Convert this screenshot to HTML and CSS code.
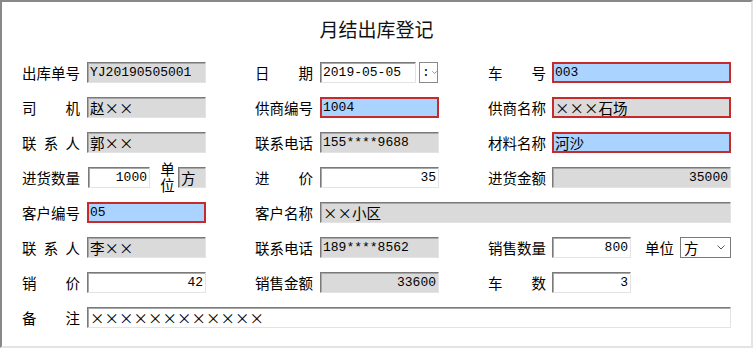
FILE: index.html
```html
<!DOCTYPE html>
<html>
<head>
  <meta charset="utf-8">
  <title>月结出库登记</title>
  <link rel="stylesheet" href="styles.css">
</head>
<body>
  <div class="window">
    <h1 class="title">月结出库登记</h1>
    <form class="form" id="outForm">
      <!-- 第一行 -->
      <div class="field"><label>出库单号</label><input class="box ro" value="YJ20190505001" readonly></div>
      <div class="field">
        <label>日期</label>
        <div class="date">
          <input class="box" value="2019-05-05">
          <span class="spin">:<svg width="8" height="5" viewBox="0 0 8 5"><polyline points="0.5,0.5 4,4 7.5,0.5" fill="none" stroke="#555" stroke-width="1"/></svg></span>
        </div>
      </div>
      <div class="field col3"><label>车号</label><input class="box req" value="003"></div>

      <!-- 第二行 -->
      <div class="field"><label>司机</label><input class="box ro cn" value="赵××" readonly></div>
      <div class="field"><label>供商编号</label><input class="box req" value="1004"></div>
      <div class="field col3"><label>供商名称</label><input class="box req ro cn" value="×××石场" readonly></div>

      <!-- 第三行 -->
      <div class="field"><label>联系人</label><input class="box ro cn" value="郭××" readonly></div>
      <div class="field"><label>联系电话</label><input class="box ro" value="155****9688" readonly></div>
      <div class="field col3"><label>材料名称</label><input class="box req cn" value="河沙"></div>

      <!-- 第四行 -->
      <div class="field qty-field">
        <label>进货数量</label>
        <input class="box num qty" value="1000">
        <span class="stack">单位</span>
        <input class="box ro cn" value="方" readonly>
      </div>
      <div class="field"><label>进价</label><input class="box num" value="35"></div>
      <div class="field col3"><label>进货金额</label><input class="box ro num" value="35000" readonly></div>

      <!-- 第五行 -->
      <div class="field"><label>客户编号</label><input class="box req" value="05"></div>
      <div class="field wide"><label>客户名称</label><input class="box ro cn" value="××小区" readonly></div>

      <!-- 第六行 -->
      <div class="field"><label>联系人</label><input class="box ro cn" value="李××" readonly></div>
      <div class="field"><label>联系电话</label><input class="box ro" value="189****8562" readonly></div>
      <div class="field col3">
        <label>销售数量</label>
        <input class="box num short" value="800">
        <span class="unit">单位</span>
        <div class="select">方<svg width="8" height="5" viewBox="0 0 8 5"><polyline points="0.5,0.5 4,4 7.5,0.5" fill="none" stroke="#555" stroke-width="1"/></svg></div>
      </div>

      <!-- 第七行 -->
      <div class="field"><label>销价</label><input class="box num" value="42"></div>
      <div class="field"><label>销售金额</label><input class="box ro num" value="33600" readonly></div>
      <div class="field col3"><label>车数</label><input class="box num short" value="3"></div>

      <!-- 备注 -->
      <div class="field full"><label>备注</label><input class="box cn" value="××××××××××××"></div>
    </form>
  </div>
</body>
</html>
```

FILE: styles.css
```css
body {
  margin: 0;
  background: #fff;
  font-family: "Noto Sans CJK SC", sans-serif;
}

.window {
  width: 753px;
  height: 348px;
  box-sizing: border-box;
  border: 2px solid;
  border-color: #888 #e4e4e4 #e4e4e4 #888;
}

.title {
  margin: 0;
  padding-top: 13px;
  font-size: 19px;
  font-weight: normal;
  line-height: 28px;
  text-align: center;
  color: #111;
}

.form {
  display: grid;
  grid-template-columns: 184px 184px 243px;
  grid-auto-rows: 21px;
  column-gap: 49px;
  row-gap: 14px;
  margin: 19px 0 0 20px;
}

.field {
  display: flex;
  align-items: center;
  gap: 7px;
}

.col3 {
  gap: 6px;
}

.wide {
  grid-column: 2 / 4;
}

.full {
  grid-column: 1 / 4;
}

.field label {
  flex: none;
  width: 58px;
  font-size: 14.5px;
  line-height: 21px;
  text-align: justify;
  text-align-last: justify;
  color: #000;
}

.box {
  flex: 1;
  min-width: 0;
  height: 21px;
  box-sizing: border-box;
  margin: 0;
  padding: 0 2px;
  border: 1px solid;
  border-color: #7a7a7a #e3e3e3 #e3e3e3 #7a7a7a;
  box-shadow: inset 1px 1px 0 #a8a8a8;
  background: #fff;
  font: 13px "Liberation Mono", "Noto Sans CJK SC", monospace;
  color: #000;
  outline: none;
}

.cn {
  font-family: "Noto Sans CJK SC", sans-serif;
  font-size: 14.5px;
  font-feature-settings: "fwid" 1;
}

.ro {
  background: #dadada;
}

.req {
  border: 2px solid #c62a2a;
  box-shadow: none;
  padding: 0 1px;
  background: #abd3ff;
}

.req.ro {
  background: #dadada;
}

.num {
  text-align: right;
}

.qty-field {
  gap: 0;
}

.qty-field label {
  margin-right: 8px;
}

.qty {
  flex: none;
  width: 62px;
}

.stack {
  flex: none;
  height: 34px;
  writing-mode: vertical-rl;
  font-size: 14.5px;
  line-height: 16px;
  letter-spacing: 2px;
  margin: 3px 3px 0 9px;
}

.short {
  flex: none;
  width: 79px;
}

.unit {
  flex: none;
  font-size: 14.5px;
  margin-left: 8px;
}

.select {
  flex: 1;
  height: 21px;
  box-sizing: border-box;
  display: flex;
  align-items: center;
  justify-content: space-between;
  padding: 0 5px 0 3px;
  border: 1px solid #7a7a7a;
  font-size: 14.5px;
}

.date {
  flex: 1;
  display: flex;
  gap: 3px;
}

.date .box {
  flex: none;
  width: 96px;
}

.spin {
  flex: none;
  width: 19px;
  height: 21px;
  box-sizing: border-box;
  display: flex;
  align-items: center;
  gap: 2px;
  padding-left: 2px;
  border: 1px solid #8a8a8a;
  font: 13px "Liberation Mono", monospace;
}
```
